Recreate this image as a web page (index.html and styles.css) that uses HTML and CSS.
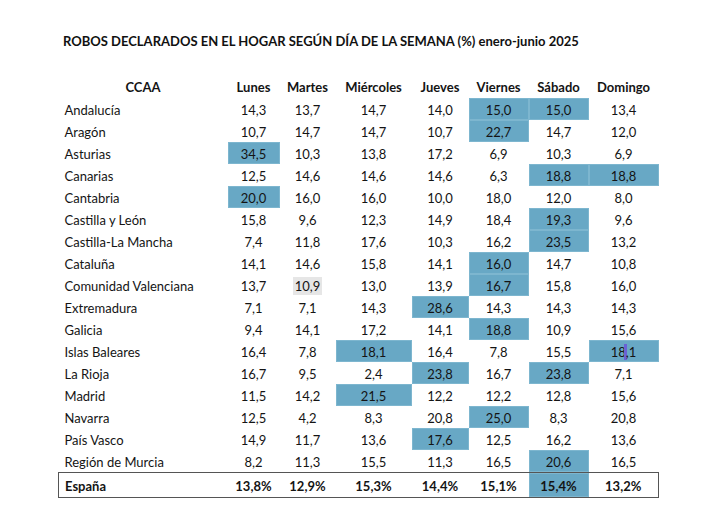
FILE: index.html
```html
<!DOCTYPE html>
<html lang="es">
<head>
<meta charset="utf-8">
<link rel="stylesheet" href="styles.css">
</head>
<body>
<div class="page">
  <h1 class="title">ROBOS DECLARADOS EN EL HOGAR SEGÚN DÍA DE LA SEMANA (%) enero-junio 2025</h1>
  <table class="data">
    <colgroup>
      <col class="c-name"><col class="c-lun"><col class="c-mar"><col class="c-mie"><col class="c-jue"><col class="c-vie"><col class="c-sab"><col class="c-dom">
    </colgroup>
    <thead>
      <tr><th class="head-name">CCAA</th><th>Lunes</th><th>Martes</th><th>Miércoles</th><th>Jueves</th><th>Viernes</th><th>Sábado</th><th>Domingo</th></tr>
    </thead>
    <tbody>
      <tr><td class="name">Andalucía</td><td>14,3</td><td>13,7</td><td>14,7</td><td>14,0</td><td class="hl">15,0</td><td class="hl">15,0</td><td>13,4</td></tr>
      <tr><td class="name">Aragón</td><td>10,7</td><td>14,7</td><td>14,7</td><td>10,7</td><td class="hl">22,7</td><td>14,7</td><td>12,0</td></tr>
      <tr><td class="name">Asturias</td><td class="hl">34,5</td><td>10,3</td><td>13,8</td><td>17,2</td><td>6,9</td><td>10,3</td><td>6,9</td></tr>
      <tr><td class="name">Canarias</td><td>12,5</td><td>14,6</td><td>14,6</td><td>14,6</td><td>6,3</td><td class="hl">18,8</td><td class="hl">18,8</td></tr>
      <tr><td class="name">Cantabria</td><td class="hl">20,0</td><td>16,0</td><td>16,0</td><td>10,0</td><td>18,0</td><td>12,0</td><td>8,0</td></tr>
      <tr><td class="name">Castilla y León</td><td>15,8</td><td>9,6</td><td>12,3</td><td>14,9</td><td>18,4</td><td class="hl">19,3</td><td>9,6</td></tr>
      <tr><td class="name">Castilla-La Mancha</td><td>7,4</td><td>11,8</td><td>17,6</td><td>10,3</td><td>16,2</td><td class="hl">23,5</td><td>13,2</td></tr>
      <tr><td class="name">Cataluña</td><td>14,1</td><td>14,6</td><td>15,8</td><td>14,1</td><td class="hl">16,0</td><td>14,7</td><td>10,8</td></tr>
      <tr><td class="name">Comunidad Valenciana</td><td>13,7</td><td><span class="grey">10,9</span></td><td>13,0</td><td>13,9</td><td class="hl">16,7</td><td>15,8</td><td>16,0</td></tr>
      <tr><td class="name">Extremadura</td><td>7,1</td><td>7,1</td><td>14,3</td><td class="hl">28,6</td><td>14,3</td><td>14,3</td><td>14,3</td></tr>
      <tr><td class="name">Galicia</td><td>9,4</td><td>14,1</td><td>17,2</td><td>14,1</td><td class="hl">18,8</td><td>10,9</td><td>15,6</td></tr>
      <tr><td class="name">Islas Baleares</td><td>16,4</td><td>7,8</td><td class="hl">18,1</td><td>16,4</td><td>7,8</td><td>15,5</td><td class="hl">18<span class="caret"></span>,1</td></tr>
      <tr><td class="name">La Rioja</td><td>16,7</td><td>9,5</td><td>2,4</td><td class="hl">23,8</td><td>16,7</td><td class="hl">23,8</td><td>7,1</td></tr>
      <tr><td class="name">Madrid</td><td>11,5</td><td>14,2</td><td class="hl">21,5</td><td>12,2</td><td>12,2</td><td>12,8</td><td>15,6</td></tr>
      <tr><td class="name">Navarra</td><td>12,5</td><td>4,2</td><td>8,3</td><td>20,8</td><td class="hl">25,0</td><td>8,3</td><td>20,8</td></tr>
      <tr><td class="name">País Vasco</td><td>14,9</td><td>11,7</td><td>13,6</td><td class="hl">17,6</td><td>12,5</td><td>16,2</td><td>13,6</td></tr>
      <tr><td class="name">Región de Murcia</td><td>8,2</td><td>11,3</td><td>15,5</td><td>11,3</td><td>16,5</td><td class="hl">20,6</td><td>16,5</td></tr>
    </tbody>
    <tfoot>
      <tr class="total"><td class="name">España</td><td>13,8%</td><td>12,9%</td><td>15,3%</td><td>14,4%</td><td>15,1%</td><td class="hl">15,4%</td><td>13,2%</td></tr>
    </tfoot>
  </table>
</div>
</body>
</html>
```
FILE: styles.css
```css
html, body {
  margin: 0;
  padding: 0;
  background: #ffffff;
}
body {
  font-family: "Lato", "Open Sans", sans-serif;
  color: #141414;
}
.page {
  padding: 32px 0 0 58px;
}
.title {
  margin: 0 0 26px 5px;
  font-size: 13px;
  line-height: 18px;
  font-weight: 700;
  color: #111;
}
.data {
  border-collapse: collapse;
  table-layout: fixed;
  width: 600px;
  font-size: 13px;
}
.c-name { width: 169px; }
.c-lun { width: 52px; }
.c-mar { width: 56px; }
.c-mie { width: 76px; }
.c-jue { width: 57px; }
.c-vie { width: 60px; }
.c-sab { width: 60px; }
.c-dom { width: 70px; }
.data th,
.data td {
  padding: 0;
  height: 22px;
  text-align: center;
  vertical-align: middle;
  white-space: nowrap;
}
.data td {
  padding-top: 2px;
  height: 20px;
}
.data th {
  font-weight: 700;
  font-size: 13px;
}
.data td.name {
  text-align: left;
  padding-left: 6px;
}
.data td.hl {
  background: #68a8c5;
  box-shadow: inset 0 0 0 1px #7db6cf;
}
.grey {
  background: #e6e6e6;
  padding: 1px 2px;
}
.caret {
  display: inline-block;
  width: 3px;
  height: 16px;
  margin: 0 -1px 0 -2px;
  vertical-align: -3px;
  background: #6a62d6;
}
.total td {
  height: 22px;
  font-weight: 700;
  border-top: 1px solid #555;
  border-bottom: 1px solid #555;
}
.total td:first-child { border-left: 1px solid #555; }
.total td:last-child { border-right: 1px solid #555; }
```
